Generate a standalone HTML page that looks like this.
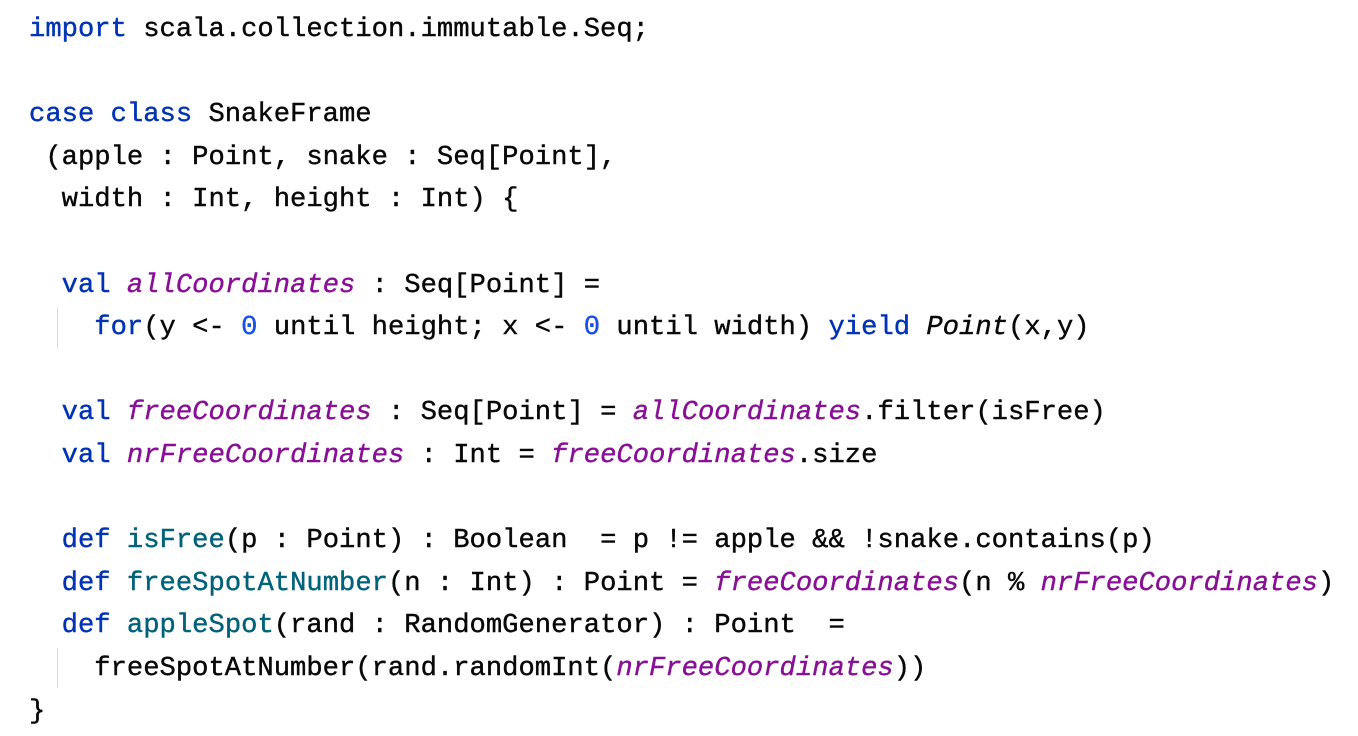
<!DOCTYPE html>
<html><head><style>
body{margin:0;background:#fff;width:1358px;height:736px;overflow:hidden;position:relative}
pre{position:absolute;left:29px;top:9px;margin:0;font-family:"Liberation Mono",monospace;font-size:27.2px;line-height:42.6px;color:#080808;-webkit-text-stroke:0.4px currentColor}
.k{color:#0033b3}.p{color:#871094;font-style:italic}.n{color:#1750eb}.f{color:#00627a}.i{font-style:italic}
.g{position:absolute;width:1px;background:#d8d8d8}
</style></head><body>
<div class="g" style="left:57px;top:308px;height:40px"></div>
<div class="g" style="left:57px;top:648px;height:40px"></div>
<pre><span class="k">import</span> scala.collection.immutable.Seq;

<span class="k">case class</span> SnakeFrame
 (apple : Point, snake : Seq[Point],
  width : Int, height : Int) {

  <span class="k">val</span> <span class="p">allCoordinates</span> : Seq[Point] =
    <span class="k">for</span>(y &lt;- <span class="n">0</span> until height; x &lt;- <span class="n">0</span> until width) <span class="k">yield</span> <span class="i">Point</span>(x,y)

  <span class="k">val</span> <span class="p">freeCoordinates</span> : Seq[Point] = <span class="p">allCoordinates</span>.filter(isFree)
  <span class="k">val</span> <span class="p">nrFreeCoordinates</span> : Int = <span class="p">freeCoordinates</span>.size

  <span class="k">def</span> <span class="f">isFree</span>(p : Point) : Boolean  = p != apple &amp;&amp; !snake.contains(p)
  <span class="k">def</span> <span class="f">freeSpotAtNumber</span>(n : Int) : Point = <span class="p">freeCoordinates</span>(n % <span class="p">nrFreeCoordinates</span>)
  <span class="k">def</span> <span class="f">appleSpot</span>(rand : RandomGenerator) : Point  =
    freeSpotAtNumber(rand.randomInt(<span class="p">nrFreeCoordinates</span>))
}</pre>
</body></html>
